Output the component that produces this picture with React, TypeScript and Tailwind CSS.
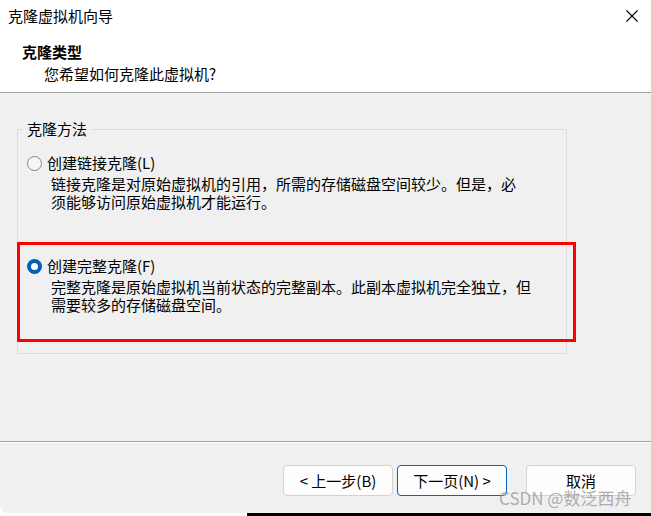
const font = "font-['Noto_Sans_CJK_SC','Noto_Sans',sans-serif]"

function Radio({ checked }: { checked?: boolean }) {
  if (checked) {
    return (
      <div className="flex h-[15px] w-[15px] shrink-0 items-center justify-center rounded-full bg-[#005fb8]">
        <div className="h-[7px] w-[7px] rounded-full bg-white" />
      </div>
    )
  }
  return <div className="h-[15px] w-[15px] shrink-0 rounded-full border border-[#858585] bg-[#f6f6f6]" />
}

function Option({
  checked,
  label,
  lines,
  className,
}: {
  checked?: boolean
  label: string
  lines: string[]
  className?: string
}) {
  return (
    <div className={className}>
      <div className="flex items-center gap-[5px] pl-[9px]">
        <Radio checked={checked} />
        <span className="text-[15px] leading-[18px]">{label}</span>
      </div>
      <div className="mt-[3px] pl-[33px] text-[15px] leading-[18px]">
        {lines.map((l, i) => (
          <div key={i} className="whitespace-nowrap">
            {l}
          </div>
        ))}
      </div>
    </div>
  )
}

export default function App() {
  const buttons = [
    { text: "< 上一步(B)", primary: false },
    { text: "下一页(N) >", primary: true },
  ]

  return (
    <div className={`relative h-[516px] w-[651px] overflow-hidden bg-white text-black ${font}`}>
      {/* title bar */}
      <div className="flex h-[32px] items-center justify-between pl-[8px] pr-[13px]">
        <span className="text-[15px] leading-[20px]">克隆虚拟机向导</span>
        <svg width="12" height="12" viewBox="0 0 12 12" className="text-black">
          <path d="M0.5 0.5 L11.5 11.5 M11.5 0.5 L0.5 11.5" stroke="currentColor" strokeWidth="1.1" fill="none" />
        </svg>
      </div>

      {/* header */}
      <div className="h-[61px] border-b border-[#a0a0a0] pt-[10px]">
        <div className="pl-[22px] text-[15px] font-bold leading-[20px]">克隆类型</div>
        <div className="mt-[2px] pl-[44px] text-[15px] leading-[20px]">您希望如何克隆此虚拟机?</div>
      </div>

      {/* body */}
      <div className="h-[348px] bg-[#f0f0f0] pt-[26px]">
        <fieldset className="ml-[17px] h-[235px] w-[550px] border border-[#dcdcdc] px-0 pt-[15px]">
          <legend className="ml-[5px] px-[4px] text-[15px] leading-[20px]">克隆方法</legend>
          <Option
            label="创建链接克隆(L)"
            lines={["链接克隆是对原始虚拟机的引用，所需的存储磁盘空间较少。但是，必", "须能够访问原始虚拟机才能运行。"]}
          />
          <Option
            checked
            className="mt-[46px]"
            label="创建完整克隆(F)"
            lines={["完整克隆是原始虚拟机当前状态的完整副本。此副本虚拟机完全独立，但", "需要较多的存储磁盘空间。"]}
          />
        </fieldset>
      </div>

      {/* footer */}
      <div className="h-[72px] rounded-bl-[8px] border-t border-[#a0a0a0] bg-[#f0f0f0]">
        <div className="h-px bg-white" />
        <div className="flex justify-end pr-[15px] pt-[22px]">
          <div className="flex gap-[4px]">
            {buttons.map((b) => (
              <button
                key={b.text}
                className={`flex h-[31px] w-[110px] items-center justify-center rounded-[4px] border bg-[#fdfdfd] text-[15px] leading-[20px] ${
                  b.primary ? "border-[#0067c0]" : "border-[#d3d3d3]"
                }`}
              >
                {b.text}
              </button>
            ))}
          </div>
          <button className="ml-[19px] flex h-[31px] w-[110px] items-center justify-center rounded-[4px] border border-[#d3d3d3] bg-[#fdfdfd] text-[15px] leading-[20px]">
            取消
          </button>
        </div>
      </div>

      <div className="flex h-[3px]">
        <div className="w-[247px] bg-white" />
        <div className="flex-1 bg-black" />
      </div>

      {/* annotation overlay */}
      <div className="absolute left-[17px] top-[242px] h-[100px] w-[559px] border-[3px] border-[#ff0000]" />

      {/* watermark */}
      <div className="absolute left-[499px] top-[487px] text-[17px] leading-[22px] text-[#9a9a9a]/80">
        CSDN @数泛西舟
      </div>
    </div>
  )
}
